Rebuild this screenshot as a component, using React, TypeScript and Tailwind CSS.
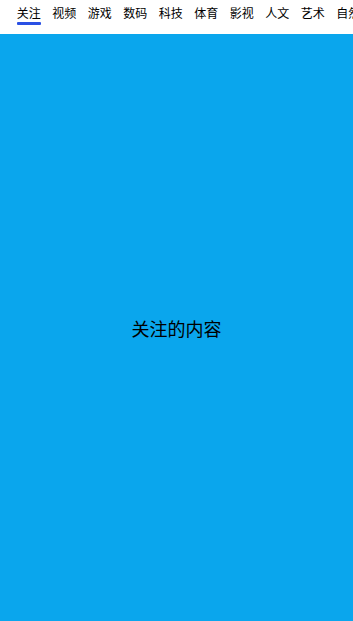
const tabs = ['关注', '视频', '游戏', '数码', '科技', '体育', '影视', '人文', '艺术', '自然'];

export default function App() {
  const active = 0;

  return (
    <div
      className="flex flex-col w-full h-[621px] bg-white overflow-hidden"
      style={{ fontFamily: '"Noto Sans CJK SC", "Noto Sans", sans-serif' }}
    >
      {/* Tab bar */}
      <div className="flex shrink-0 h-[34px] pl-[11px] bg-white overflow-hidden whitespace-nowrap">
        {tabs.map((t, i) => (
          <div key={t} className="relative flex flex-col items-center shrink-0 w-[35.5px] pt-[5px]">
            <span className="text-[12px] leading-[16px] text-black">{t}</span>
            {i === active && (
              <span className="mt-[1px] w-[24px] h-[3px] rounded-[1px] bg-[#2a50e4]" />
            )}
          </div>
        ))}
      </div>

      {/* Content */}
      <div className="flex flex-1 items-center justify-center bg-[#0aa6ed] pt-[2px]">
        <span className="text-[18px] text-black">关注的内容</span>
      </div>
    </div>
  );
}
